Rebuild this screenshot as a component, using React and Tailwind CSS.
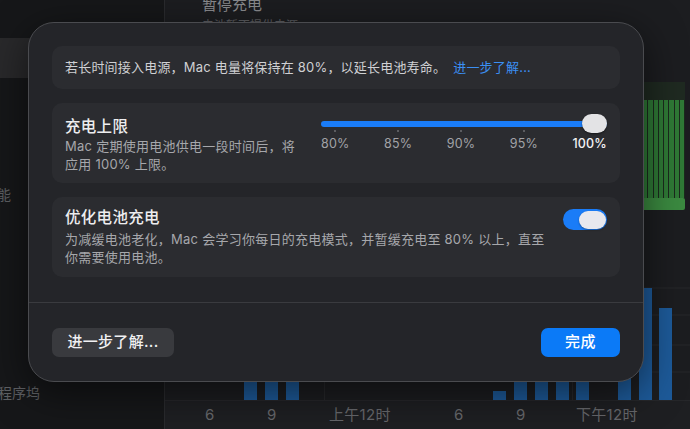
import React from "react";

const bars = [
  0, 0, 0, 30, 40, 25, 0, 0, 0, 0, 0, 0, 0, 0, 0, 9, 25, 30, 22, 28, 0, 60, 112, 92,
];

function Slider() {
  const labels = ["80%", "85%", "90%", "95%", "100%"];
  return (
    <div className="w-[286px] shrink-0 pt-[11px]">
      <div className="relative h-[19px] flex items-center">
        <div className="h-[6px] w-full rounded-full bg-[#1a7cf7]" />
        <div className="absolute right-0 top-0 h-[19px] w-[25px] rounded-full bg-[#e3e3e5] shadow-[0_1px_2px_rgba(0,0,0,0.5)]" />
      </div>
      <div className="-mt-[3px] flex justify-between">
        {labels.map((l, i) => (
          <div key={l} className="flex flex-col items-center">
            <div
              className={
                i < 4
                  ? "h-[2px] w-[2px] rounded-full bg-[#6c6d71]"
                  : "h-[2px] w-[2px]"
              }
            />
            <div
              className={
                "mt-[4px] text-[12.5px] leading-[16px] tracking-[0.2px] " +
                (i === 4 ? "text-[#f2f2f4] font-medium" : "text-[#a2a3a7]")
              }
            >
              {l}
            </div>
          </div>
        ))}
      </div>
    </div>
  );
}

function Toggle() {
  return (
    <div className="mt-[12px] flex h-[21px] w-[44px] shrink-0 items-center justify-end rounded-full bg-[#1a7cf7] px-[1.5px]">
      <div className="h-[18px] w-[27px] rounded-full bg-[#e7e8ee] shadow-[0_1px_2px_rgba(0,0,0,0.35)]" />
    </div>
  );
}

export default function App() {
  return (
    <div className="relative flex h-[429px] w-[690px] overflow-hidden bg-[#1c1d20] font-[Inter,'Noto_Sans_CJK_SC',sans-serif] text-white">
      {/* Sidebar (background) */}
      <div className="flex w-[165px] shrink-0 flex-col border-r border-[#2a2b2e] bg-[#161719]">
        <div className="mt-[38px] h-[40px] bg-[#29292b]" />
        <div className="mt-[107px] -ml-[3px] text-[14px] leading-[20px] text-[#5f6064]">
          能
        </div>
        <div className="mt-[178px] -ml-[2px] text-[14px] leading-[20px] text-[#5f6064]">
          程序坞
        </div>
      </div>

      {/* Main background */}
      <div className="flex flex-1 flex-col">
        <div className="h-[82px] pl-[37px]">
          <div className="-mt-[5px] text-[15px] leading-[19px] text-[#8a8b8e]">
            暂停充电
          </div>
          <div className="mt-[4px] text-[12px] leading-[16px] text-[#5c5d60]">
            电池暂不提供电源
          </div>
        </div>
        <div className="mr-[5px] flex h-[128px] w-[90px] flex-col self-end">
          <div className="h-[18px] bg-[#1f2a21]" />
          <div className="flex flex-1 gap-[1px] bg-[#1b2a1d] px-[1px]">
            {Array.from({ length: 17 }).map((_, i) => (
              <div key={i} className="flex-1 bg-[#2f7a36]" />
            ))}
          </div>
          <div className="h-[12px] rounded-[2px] bg-[#3b8a40]" />
        </div>
        <div className="relative flex-1">
          <svg className="absolute inset-0" width="525" height="190">
            <line x1="0" x2="525" y1="78" y2="78" stroke="#27282b" />
            <line x1="0" x2="525" y1="105" y2="105" stroke="#27282b" />
            <line x1="0" x2="525" y1="135" y2="135" stroke="#27282b" />
            <line x1="0" x2="525" y1="162" y2="162" stroke="#27282b" />
            <line x1="159.5" x2="159.5" y1="0" y2="190" stroke="#27282b" />
            <line x1="407.5" x2="407.5" y1="0" y2="190" stroke="#27282b" />
          </svg>
          <div className="relative flex h-full items-end gap-[7.75px] pl-[17px]">
            {bars.map((h, i) => (
              <div
                key={i}
                className="w-[13px] shrink-0 bg-[#1d5a99]"
                style={{ height: h }}
              />
            ))}
          </div>
        </div>
        <div className="flex h-[29px] items-center border-t border-[#26272a] bg-[#1e1f22] text-[15px] tracking-[0.3px] text-[#66676b]">
          <div className="w-[40px]" />
          <div className="w-[62px]">6</div>
          <div className="w-[62px]">9</div>
          <div className="w-[125px]">上午12时</div>
          <div className="w-[62px]">6</div>
          <div className="w-[60px]">9</div>
          <div>下午12时</div>
        </div>
      </div>

      {/* Modal sheet */}
      <div className="absolute left-[28px] top-[22px] flex h-[360px] w-[616px] flex-col rounded-[26px] border border-[#4a4b4f] bg-[#242529] shadow-[0_10px_40px_rgba(0,0,0,0.55)]">
        <div className="flex flex-col px-[23px] pt-[23px]">
          <div className="flex h-[43px] items-center rounded-[10px] bg-[#2b2c30] px-[13px] text-[13px] tracking-[0.2px] text-[#cfd0d3]">
            <span>若长时间接入电源，Mac 电量将保持在 80%，以延长电池寿命。</span>
            <span className="ml-[7px] text-[#3b8ff3]">进一步了解...</span>
          </div>

          <div className="mt-[14px] flex h-[80px] justify-between rounded-[10px] bg-[#2b2c30] pl-[13px] pr-[13px]">
            <div className="pt-[13px]">
              <div className="text-[15.5px] font-medium leading-[21px] tracking-[0.3px] text-[#ededef]">
                充电上限
              </div>
              <div className="text-[13px] leading-[18px] tracking-[0.25px] text-[#a6a7ab]">
                <div>Mac 定期使用电池供电一段时间后，将</div>
                <div>应用 100% 上限。</div>
              </div>
            </div>
            <Slider />
          </div>

          <div className="mt-[14px] flex h-[80px] justify-between rounded-[10px] bg-[#2b2c30] pl-[13px] pr-[13px]">
            <div className="pt-[10px]">
              <div className="text-[15.5px] font-medium leading-[21px] tracking-[0.3px] text-[#ededef]">
                优化电池充电
              </div>
              <div className="mt-[2px] text-[13px] leading-[18px] tracking-[0.25px] text-[#a6a7ab]">
                <div>为减缓电池老化，Mac 会学习你每日的充电模式，并暂缓充电至 80% 以上，直至</div>
                <div>你需要使用电池。</div>
              </div>
            </div>
            <Toggle />
          </div>
        </div>

        <div className="mt-[25px] h-px bg-[#3a3b3f]" />

        <div className="flex items-center justify-between px-[23px] pt-[25px]">
          <div className="flex h-[29px] w-[122px] items-center justify-center rounded-[7px] bg-[#393a3e] text-[15px] font-medium tracking-[0.3px] text-[#f0f0f2]">
            进一步了解...
          </div>
          <div className="flex h-[29px] w-[79px] items-center justify-center rounded-[7px] bg-[#0b7af7] text-[15px] font-medium tracking-[0.5px] text-white">
            完成
          </div>
        </div>
      </div>
    </div>
  );
}
